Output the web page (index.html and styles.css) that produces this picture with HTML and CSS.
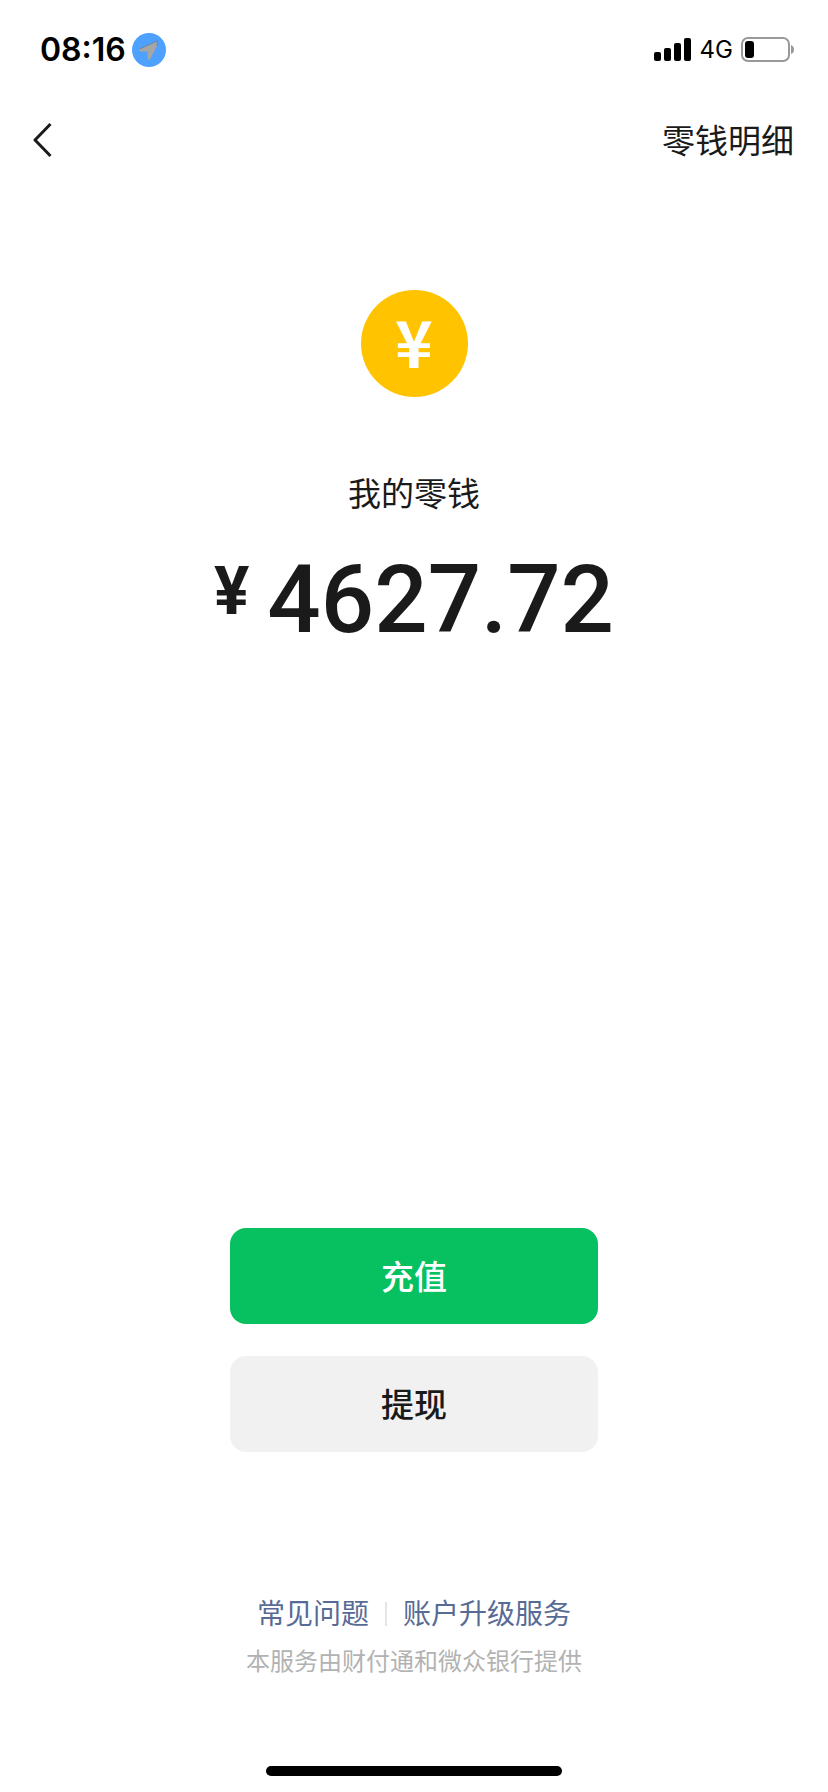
FILE: index.html
```
<!DOCTYPE html>
<html lang="zh-CN">
<head>
	<meta charset="UTF-8">
	<meta name="viewport" content="width=device-width, initial-scale=1">
	<title>我的零钱</title>
	<link rel="stylesheet" href="styles.css">
</head>
<body>
<div class="page">
	<div class="status">
		<div class="status-left">
			<span class="time">08:16</span>
			<svg class="location" width="34" height="34" viewBox="0 0 34 34">
				<circle cx="17" cy="17" r="17" fill="#4fa1ff"/>
				<path d="M26 8 L7 16.500 Q6.500 18 8 18.500 H15.500 V26 Q16.500 27.500 18 26 L25 13 Z" fill="#a6a6a6"/>
				<path d="M7.500 16 L25.500 7.800 L25 13" fill="none" stroke="#6f86a3" stroke-width="1"/>
			</svg>
		</div>
		<div class="status-right">
			<svg width="38" height="24" viewBox="0 0 38 24">
				<rect x="0" y="14" width="7" height="9" rx="2"/>
				<rect x="10" y="10" width="7" height="13" rx="2"/>
				<rect x="20" y="5" width="7" height="18" rx="2"/>
				<rect x="30" y="0" width="7" height="23" rx="2"/>
			</svg>
			<span class="net">4G</span>
			<svg width="54" height="26" viewBox="0 0 54 26">
				<rect x="1" y="1" width="47" height="23" rx="6" fill="none" stroke="#999" stroke-width="2"/>
				<rect x="4" y="4" width="9" height="17" rx="3"/>
				<path d="M50 8 Q53 9 53 12.500 Q53 16 50 17 Z" fill="#999"/>
			</svg>
		</div>
	</div>
	<div class="nav">
		<button class="back" type="button" aria-label="返回">
			<svg width="20" height="36" viewBox="0 0 20 36">
				<path d="M17.500 2 L2 18 L17.500 34" fill="none" stroke="#1a1a1a" stroke-width="3" stroke-linejoin="round"/>
			</svg>
		</button>
		<a class="detail" href="#">零钱明细</a>
	</div>
	<div class="balance">
		<div class="coin">¥</div>
		<h1>我的零钱</h1>
		<p class="money"><span class="unit">¥</span><span class="num">4627.72</span></p>
	</div>
	<div class="btns">
		<button class="btn recharge" type="button">充值</button>
		<button class="btn withdraw" type="button">提现</button>
	</div>
	<div class="foot">
		<div class="links">
			<a href="#">常见问题</a>
			<a href="#">账户升级服务</a>
		</div>
		<p>本服务由财付通和微众银行提供</p>
	</div>
	<div class="home"></div>
</div>
</body>
</html>
```
FILE: styles.css
```
*{ padding: 0; margin: 0; box-sizing: border-box;}
body{ background: #fff; color: #1a1a1a; font-family: "Noto Sans CJK SC", sans-serif;}
a{ text-decoration: none;}
button{ border: 0; background: none; font-family: inherit; cursor: pointer;}
svg{ display: block;}
.page{ min-height: 100vh; display: flex; flex-direction: column; align-items: center; padding-bottom: 16px;}

/*状态栏*/
.status{ width: 100%; height: 98px; padding: 2px 33px 0 40px; display: flex; justify-content: space-between; align-items: center; color: #000; font-family: Inter, sans-serif;}
.status-left,.status-right{ display: flex; align-items: center;}
.status-left{ gap: 6px;}
.status-right{ gap: 8px;}
.time{ font-size: 32px; font-weight: 600; line-height: 40px;}
.net{ font-size: 24px; line-height: 32px;}

/*导航*/
.nav{ width: 100%; height: 84px; padding: 0 34px 0 33px; display: flex; justify-content: space-between; align-items: center;}
.detail{ color: #1a1a1a; font-size: 33px; line-height: 48px; padding-bottom: 2px;}

/*余额*/
.balance{ padding-top: 108px; display: flex; flex-direction: column; align-items: center;}
.coin{ width: 107px; height: 107px; border-radius: 50%; background: #ffc300; color: #fff; font-size: 64px; font-weight: 700; line-height: 100px; text-align: center;}
.balance h1{ margin-top: 71px; font-size: 33px; font-weight: 400; line-height: 48px;}
.money{ margin-top: 36px; display: flex; align-items: flex-start; gap: 18px; font-family: Roboto, sans-serif;}
.unit{ font-size: 66px; font-weight: 700; line-height: 80px;}
.num{ font-size: 94px; font-weight: 500; line-height: 96px;}

/*按钮*/
.btns{ width: 100%; margin-top: auto; display: flex; flex-direction: column; align-items: center; gap: 32px;}
.btn{ width: 368px; max-width: 80%; height: 96px; padding-bottom: 2px; border-radius: 16px; font-size: 33px; font-weight: 500;}
.recharge{ background: #07c160; color: #fff;}
.withdraw{ background: #f1f1f1; color: #1a1a1a;}

/*底部*/
.foot{ margin-top: 140px; text-align: center;}
.links{ display: flex; justify-content: center; align-items: center;}
.links a{ color: #576b95; font-size: 28px; line-height: 40px;}
.links a + a::before{ content: ""; display: inline-block; width: 2px; height: 24px; margin: 0 16px; background: #e5e5e5; vertical-align: -2px;}
.foot p{ margin-top: 12px; color: #b2b2b2; font-size: 24px; line-height: 32px;}
.home{ width: 296px; height: 10px; margin-top: 90px; border-radius: 5px; background: #000;}
```
